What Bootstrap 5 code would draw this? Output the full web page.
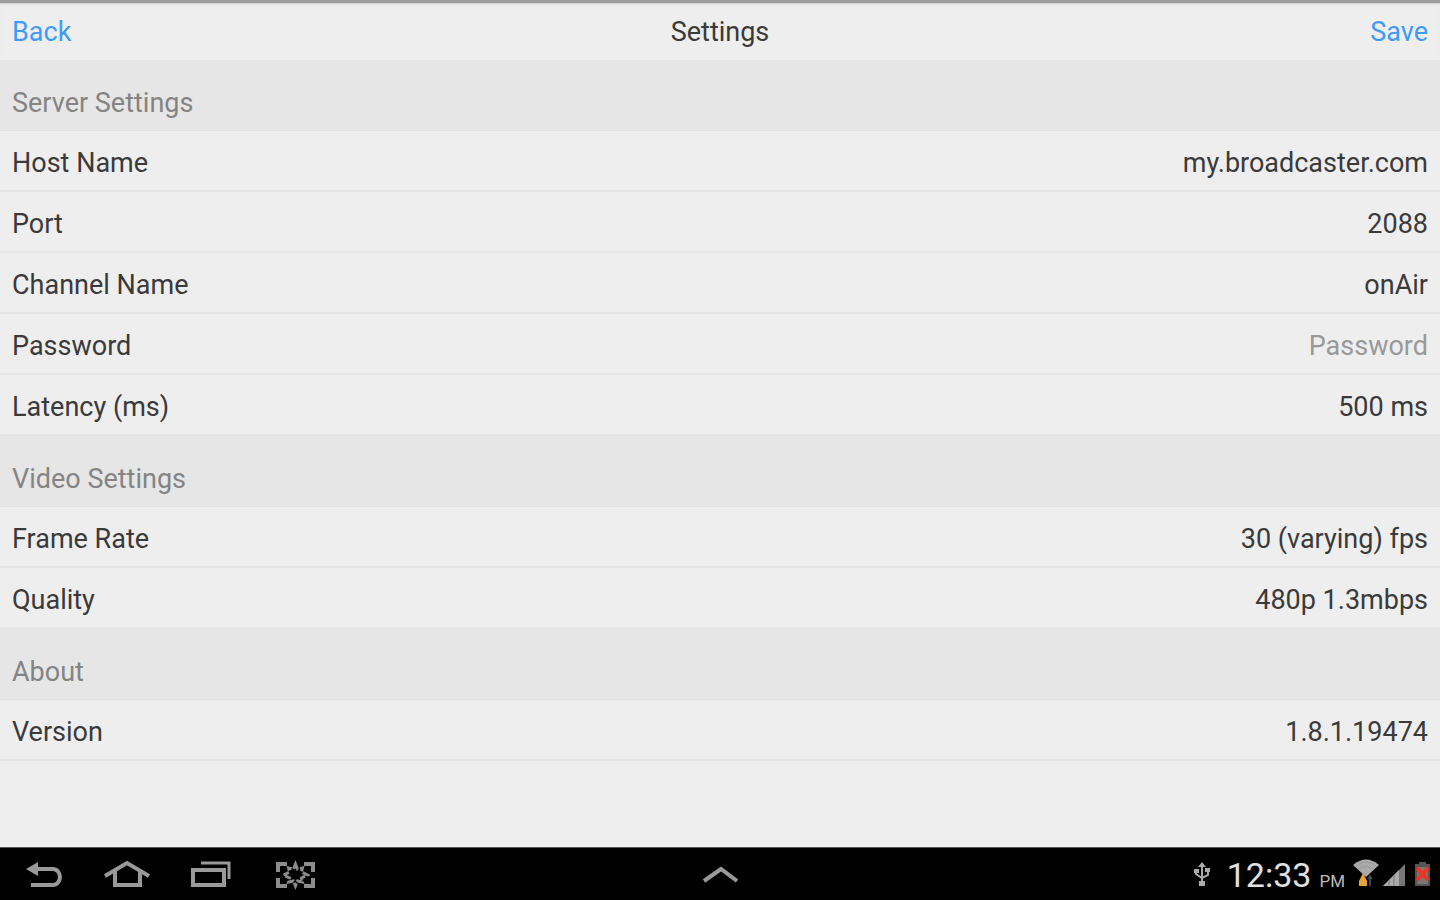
<!DOCTYPE html>
<html lang="en">
<head>
<meta charset="utf-8">
<meta name="viewport" content="width=device-width, initial-scale=1">
<title>Settings</title>
<link href="https://cdn.jsdelivr.net/npm/bootstrap@5.3.0/dist/css/bootstrap.min.css" rel="stylesheet">
<style>
  body { font-family: Roboto, "Liberation Sans", sans-serif; font-size: 27px; line-height: 32px; color: #3a3a3a; background: #eee; }
  .top-bar { height: 60px; padding: 0 12px; border-top: 3px solid #9e9e9e; box-shadow: inset 0 2px 2px -1px #ccc; }
  .top-bar h1 { font-size: 27px; line-height: 32px; }
  .top-bar a { color: #3d9bfa; }
  .section-title { height: 71px; padding: 16px 12px 0; margin: 0; font-size: 27px; font-weight: 400; line-height: 32px; color: #848484; background: #e6e6e6; border-bottom: 1px solid #e0e0e0; }
  .setting { height: 61px; padding: 5px 12px 0; border-bottom: 2px solid #e5e5e5; }
  .setting input, .setting select { appearance: none; border: 0; padding: 0; background: transparent; color: inherit; font: inherit; text-align: right; text-align-last: right; outline-offset: 4px; min-width: 0; }
  .setting input::placeholder { color: #999; opacity: 1; }
  .system-bar { height: 53px; background: #000; border-top: 1px solid #555; padding: 2px 8px 0; }
  .system-bar button { border: 0; padding: 0; background: transparent; display: flex; }
  .keys { gap: 40px; padding-left: 16px; }
  .clock { font-size: 34px; line-height: 40px; color: #e0e0e0; gap: 8px; }
  .clock small { font-size: 17px; line-height: 20px; color: #bbb; }
</style>
</head>
<body class="d-flex flex-column min-vh-100">
<header class="top-bar row g-0 align-items-center">
  <div class="col"><a class="text-decoration-none" href="#back">Back</a></div>
  <h1 class="col-auto m-0 fw-normal">Settings</h1>
  <div class="col text-end"><a class="text-decoration-none" href="#save">Save</a></div>
</header>
<main class="flex-grow-1">
  <h2 class="section-title d-flex align-items-center">Server Settings</h2>
  <div class="setting d-flex align-items-center justify-content-between"><label for="host">Host Name</label><input class="w-50" id="host" type="text" value="my.broadcaster.com"></div>
  <div class="setting d-flex align-items-center justify-content-between"><label for="port">Port</label><input class="w-50" id="port" type="text" inputmode="numeric" value="2088"></div>
  <div class="setting d-flex align-items-center justify-content-between"><label for="channel">Channel Name</label><input class="w-50" id="channel" type="text" value="onAir"></div>
  <div class="setting d-flex align-items-center justify-content-between"><label for="password">Password</label><input class="w-50" id="password" type="password" placeholder="Password"></div>
  <div class="setting d-flex align-items-center justify-content-between"><label for="latency">Latency (ms)</label><input class="w-50" id="latency" type="text" value="500 ms"></div>
  <h2 class="section-title d-flex align-items-center">Video Settings</h2>
  <div class="setting d-flex align-items-center justify-content-between"><label for="rate">Frame Rate</label><select class="w-50" id="rate"><option>30 (varying) fps</option></select></div>
  <div class="setting d-flex align-items-center justify-content-between"><label for="quality">Quality</label><select class="w-50" id="quality"><option>480p 1.3mbps</option></select></div>
  <h2 class="section-title d-flex align-items-center">About</h2>
  <div class="setting d-flex align-items-center justify-content-between"><span>Version</span><span>1.8.1.19474</span></div>
</main>
<footer class="system-bar row g-0 align-items-center">
  <div class="col"><div class="keys d-flex">
    <button type="button" aria-label="Back"><svg width="40" height="32" viewBox="0 0 40 32" fill="none" stroke="#999" stroke-width="4"><path d="M12 10h17c4 0 7 4 7 8s-3 8-7 8H7"/><path d="M2 10l12-7v14z" fill="#999" stroke="none"/></svg></button>
    <button type="button" aria-label="Home"><svg width="46" height="32" viewBox="0 0 46 32" fill="none" stroke="#999" stroke-width="4"><path d="M1 17L23 4l22 13M11 12v14h25V12"/></svg></button>
    <button type="button" aria-label="Recent apps"><svg width="44" height="32" viewBox="0 0 44 32" fill="none" stroke="#999" stroke-width="4"><path d="M3 11h31v15H3z"/><path d="M11 4h28v16" stroke-width="3"/></svg></button>
    <button type="button" aria-label="Screenshot"><svg width="42" height="32" viewBox="0 0 42 32" fill="none" stroke="#8c8c8c" stroke-width="4"><path d="M4 13V5h9M30 5h9v8M39 19v8h-9M13 27H4v-8"/><path d="M21.500 5l2 5 5-1-1 4 6 3-6 3 1 4-5-1-2 5-2-5-5 1 1-4-6-3 6-3-1-4 5 1z" stroke-width="3" stroke-dasharray="6 2"/></svg></button>
  </div></div>
  <div class="col-auto"><button type="button" aria-label="Show tray"><svg width="36" height="32" viewBox="0 0 36 32" fill="none" stroke="#999" stroke-width="4"><path d="M2 22L19 10l16 12"/></svg></button></div>
  <div class="col d-flex justify-content-end align-items-center">
    <svg class="me-3" width="18" height="28" viewBox="0 0 18 28" fill="none" stroke="#aaa" stroke-width="2"><path d="M9 5v17M3 10v3l6 4 6-3V9"/><path d="M9 1l4 5H5zM1 8h5v4H1zM12 7h5v4h-5zM6 20h6v5H6z" fill="#aaa" stroke="none"/></svg>
    <div class="clock d-flex align-items-baseline"><span>12:33</span><small>PM</small></div>
    <svg class="ms-2" width="26" height="32" viewBox="0 0 26 32"><path d="M0 6Q13-5 26 6L13 18z" fill="#aaa"/><path d="M3 7Q13-1 23 7M6 10q7-5 14 0" fill="none" stroke="#9b9b9b"/><path d="M10 14l4 8v5H6v-5z" fill="#e5a33b"/><path d="M17 27V17m-2 3l2-3 2 3" fill="none" stroke="#444" stroke-width="2"/></svg>
    <svg class="ms-1" width="23" height="32" viewBox="0 0 23 32"><path d="M0 27L22 5v22z" fill="#777"/><path d="M0 27l16-16v16z" fill="#aaa"/><path d="M6 21v6M11 16v11M17 11v16" stroke="#777"/></svg>
    <svg class="ms-2" width="18" height="32" viewBox="0 0 18 32"><path d="M5 3h7v2h4v22H1V5h4z" fill="#555"/><path d="M3 8h11v17H3z" fill="#777"/><path d="M3 9l11 12M14 9L3 21" stroke="#ed3524" stroke-width="4"/></svg>
  </div>
</footer>
<script src="https://cdn.jsdelivr.net/npm/bootstrap@5.3.0/dist/js/bootstrap.bundle.min.js"></script>
</body>
</html>
